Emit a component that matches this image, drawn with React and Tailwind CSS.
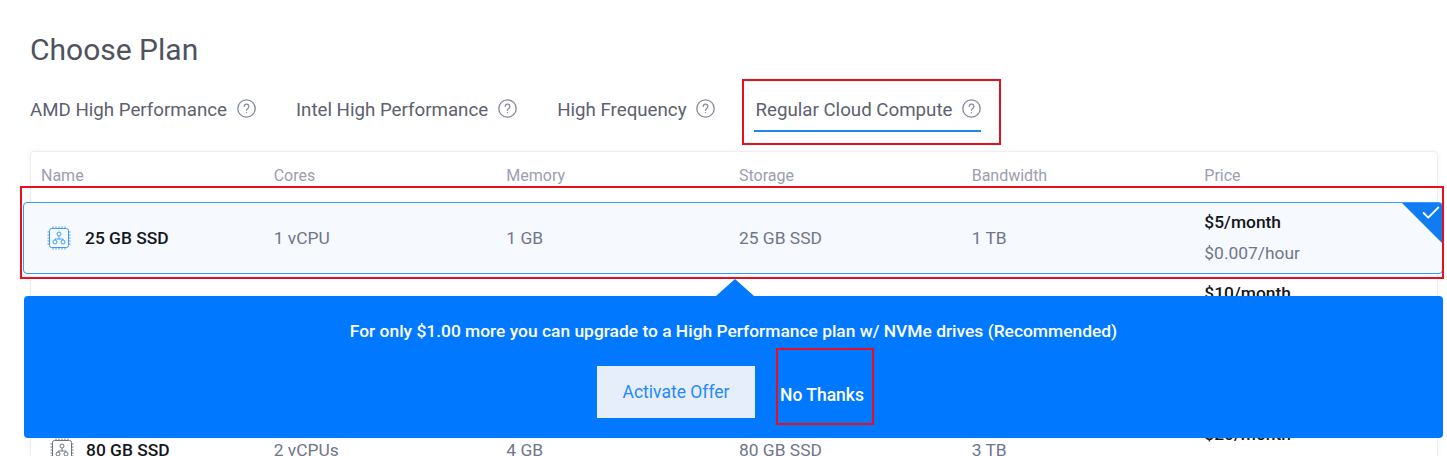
import { Check } from 'lucide-react';

const tabs = ['AMD High Performance', 'Intel High Performance', 'High Frequency', 'Regular Cloud Compute'];
const columns = ['Name', 'Cores', 'Memory', 'Storage', 'Bandwidth', 'Price'];
const plans = [
  { name: '25 GB SSD', cores: '1 vCPU', memory: '1 GB', bandwidth: '1 TB', month: '$5/month', hour: '$0.007/hour' },
  { name: '55 GB SSD', cores: '1 vCPU', memory: '2 GB', bandwidth: '2 TB', month: '$10/month', hour: '$0.015/hour' },
  { name: '65 GB SSD', cores: '1 vCPU', memory: '2 GB', bandwidth: '2 TB', month: '$15/month', hour: '$0.022/hour' },
  { name: '80 GB SSD', cores: '2 vCPUs', memory: '4 GB', bandwidth: '3 TB', month: '$20/month', hour: '$0.030/hour' },
];

function HelpIcon() {
  return (
    <svg width="19" height="19" viewBox="0 0 19 19" fill="none" stroke="#85889a" className="shrink-0">
      <circle cx="9.5" cy="9.5" r="8.7" strokeWidth="1.3" />
      <path d="M7.2 7.4a2.35 2.35 0 1 1 3.6 2c-.8.5-1.3.9-1.3 1.9" strokeWidth="1.2" strokeLinecap="round" />
      <circle cx="9.5" cy="13.6" r=".7" fill="#85889a" stroke="none" />
    </svg>
  );
}

function ChipIcon({ color }) {
  return (
    <svg width="24" height="24" viewBox="0 0 24 24" fill="none" stroke={color} strokeWidth="1" className="shrink-0">
      <rect x="2.5" y="2.5" width="19" height="19" rx="2" />
      <path d="M6 2.5V.5M9 2.5V.5M12 2.5V.5M15 2.5V.5M18 2.5V.5M6 23.5v-2M9 23.5v-2M12 23.5v-2M15 23.5v-2M18 23.5v-2M.5 6h2M.5 9h2M.5 12h2M.5 15h2M.5 18h2M21.500 6h2M21.500 9h2M21.500 12h2M21.500 15h2M21.500 18h2" />
      <circle cx="12" cy="8" r="2" />
      <circle cx="8" cy="16" r="2" />
      <circle cx="16" cy="16" r="2" />
      <path d="M12 10v3M8 14v-1h8v1" />
    </svg>
  );
}

function PlanRow({ plan, selected }) {
  return (
    <div
      className={
        selected
          ? 'relative -mr-[6px] -ml-[8px] grid h-[72px] grid-cols-6 items-center overflow-hidden rounded border border-[#3d97fb] bg-[#f6f9fd] pr-[5px] pl-[17px]'
          : 'grid h-[70.5px] grid-cols-6 items-center pl-[10px]'
      }
    >
      <div className={selected ? 'flex items-center gap-[14px] pl-[6px]' : 'flex items-center gap-[12px] pl-[9px]'}>
        <ChipIcon color={selected ? '#3f9bff' : '#6f7480'} />
        <span className="text-[17.4px] font-medium text-[#14161d]">{plan.name}</span>
      </div>
      <span className="text-[17.4px] text-[#70758a]">{plan.cores}</span>
      <span className="text-[17.4px] text-[#70758a]">{plan.memory}</span>
      <span className="text-[17.4px] text-[#70758a]">{plan.name}</span>
      <span className="text-[17.4px] text-[#70758a]">{plan.bandwidth}</span>
      <div className="flex flex-col gap-[9px] pb-[2px]">
        <span className="text-[17.4px] leading-[22px] font-medium text-[#14161d]">{plan.month}</span>
        <span className="text-[17.4px] leading-[22px] text-[#70758a]">{plan.hour}</span>
      </div>
      {selected && (
        <div className="absolute top-0 right-0 h-[40px] w-[40px] bg-[#0f7cf2] [clip-path:polygon(0_0,100%_0,100%_100%)]">
          <Check size={22} strokeWidth={2} className="absolute -top-px right-0 text-white" />
        </div>
      )}
    </div>
  );
}

function UpsellBanner() {
  return (
    <div className="absolute top-[144px] right-[-6px] left-[-7px] flex h-[142px] flex-col items-center rounded bg-[#0078ff] text-white">
      <div className="absolute top-[-17px] left-[692px] h-[17px] w-[38px] bg-[#0078ff] [clip-path:polygon(50%_0,100%_100%,0_100%)]" />
      <p className="mt-[22px] text-[17.4px] leading-[26px] font-medium">
        For only $1.00 more you can upgrade to a High Performance plan w/ NVMe drives (Recommended)
      </p>
      <div className="mt-[22px] flex items-start gap-[25px] pr-[6px]">
        <button className="h-[52px] w-[158px] bg-[#e7eefb] text-[17.5px] text-[#2389fb]">Activate Offer</button>
        <button className="mt-[17px] text-[17.5px] leading-[24px] font-medium">No Thanks</button>
      </div>
    </div>
  );
}

export default function App() {
  return (
    <div className="relative h-[456px] overflow-hidden bg-white px-[30px] pt-[32px] font-['Roboto',sans-serif]">
      <h1 className="text-[30px] leading-[36px] text-[#4f5360]">Choose Plan</h1>

      <div className="mt-[28px] flex gap-10">
        {tabs.map((tab, i) => (
          <div
            key={tab}
            className={
              i === 3
                ? '-ml-px flex h-[36px] items-start gap-[10px] border-b-2 border-[#1f87f5] pt-[3px] pl-px'
                : 'flex h-[36px] items-start gap-[10px] pt-[3px]'
            }
          >
            <span className="text-[18.72px] leading-[23px] text-[#5c6170]">{tab}</span>
            <HelpIcon />
          </div>
        ))}
      </div>

      <div className="relative mt-[19px] mr-[-21px] rounded border border-[#eeeff2] shadow-[0_0_6px_rgba(0,0,0,0.05)]">
        <div className="grid h-[50px] grid-cols-6 items-center pl-[10px]">
          {columns.map((col) => (
            <span key={col} className="pb-[3px] text-base text-[#9a9eae]">{col}</span>
          ))}
        </div>
        {plans.map((plan, i) => (
          <PlanRow key={plan.month} plan={plan} selected={i === 0} />
        ))}
        <UpsellBanner />
      </div>

      {/* red callouts drawn over the screenshot */}
      <div className="absolute top-[79px] left-[742px] h-[66px] w-[259px] border-2 border-[#e8101f]" />
      <div className="absolute top-[186px] left-[20px] h-[93px] w-[1424px] border-2 border-[#e8101f]" />
      <div className="absolute top-[348px] left-[776px] h-[77px] w-[98px] border-2 border-[#e8101f]" />
    </div>
  );
}
